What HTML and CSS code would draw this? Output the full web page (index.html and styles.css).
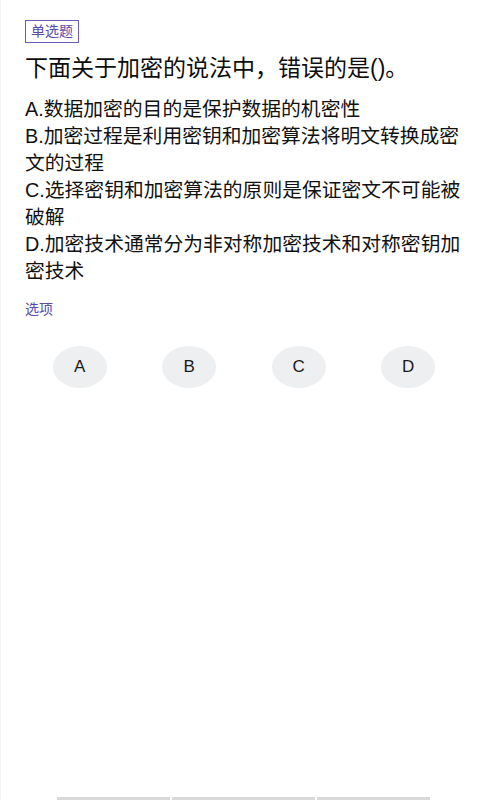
FILE: index.html
```html
<!DOCTYPE html>
<html lang="zh">
<head>
<meta charset="utf-8">
<link rel="stylesheet" href="styles.css">
</head>
<body>
<div class="page">
  <div class="content">
    <span class="tag">单选题</span>
    <h1 class="title">下面关于加密的说法中，错误的是()。</h1>
    <div class="options">
      <p class="opt">A.数据加密的目的是保护数据的机密性</p>
      <p class="opt">B.加密过程是利用密钥和加密算法将明文转换成密文的过程</p>
      <p class="opt">C.选择密钥和加密算法的原则是保证密文不可能被破解</p>
      <p class="opt">D.加密技术通常分为非对称加密技术和对称密钥加密技术</p>
    </div>
    <div class="label">选项</div>
    <div class="choices">
      <div class="cell"><span class="bubble">A</span></div>
      <div class="cell"><span class="bubble">B</span></div>
      <div class="cell"><span class="bubble">C</span></div>
      <div class="cell"><span class="bubble">D</span></div>
    </div>
  </div>
  <div class="bottom">
    <span class="seg s1"></span>
    <span class="seg s2"></span>
    <span class="seg s3"></span>
  </div>
</div>
</body>
</html>
```
FILE: styles.css
```css
html, body {
  margin: 0;
  padding: 0;
  background: #ffffff;
}
body {
  font-family: "Liberation Sans", "Noto Sans CJK SC", sans-serif;
  color: #111111;
}
.page {
  min-height: 800px;
  display: flex;
  flex-direction: column;
  border-left: 1px solid #f2f2f2;
  box-sizing: border-box;
}
.content {
  padding: 20px 17px 0 24px;
  display: flex;
  flex-direction: column;
  align-items: flex-start;
}
.tag {
  display: inline-block;
  border: 1px solid #6a5bb8;
  color: #5b4ba8;
  font-size: 14px;
  line-height: 21px;
  padding: 0 5px;
}
.title {
  margin: 9px 0 0 0;
  font-size: 23px;
  font-weight: 400;
  line-height: 32px;
  color: #0d0d0d;
}
.options {
  margin-top: 12px;
  width: 100%;
}
.opt {
  margin: 0;
  font-size: 19.8px;
  line-height: 27px;
  color: #111111;
}
.label {
  margin-top: 14px;
  font-size: 14px;
  line-height: 20px;
  color: #5b4ba8;
}
.choices {
  margin-top: 27px;
  width: 100%;
  display: grid;
  grid-template-columns: repeat(4, 1fr);
}
.cell {
  display: flex;
  justify-content: center;
}
.bubble {
  width: 54px;
  height: 42px;
  border-radius: 50%;
  background: #eeeff1;
  display: flex;
  align-items: center;
  justify-content: center;
  font-size: 17px;
  color: #1a1a1a;
}
.bottom {
  margin-top: auto;
  display: flex;
  gap: 2px;
  padding-left: 56px;
  height: 3px;
}
.seg {
  height: 3px;
  background: #d9d9d9;
}
.s1 { width: 113px; }
.s2 { width: 143px; }
.s3 { width: 113px; }
```
